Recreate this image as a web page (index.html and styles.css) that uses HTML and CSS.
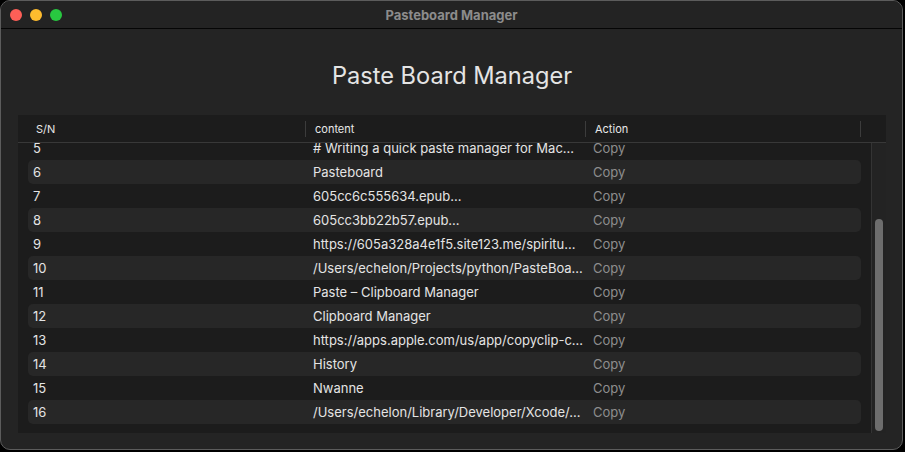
FILE: index.html
```html
<!DOCTYPE html>
<html lang="en">
<head>
    <meta charset="UTF-8">
    <meta name="viewport" content="width=device-width, initial-scale=1.0">
    <title>Pasteboard Manager</title>
    <link rel="stylesheet" href="styles.css">
</head>
<body>
    <div class="window">
        <div class="titlebar">
            <div class="lights">
                <span class="light red"></span>
                <span class="light yellow"></span>
                <span class="light green"></span>
            </div>
            <div class="title">Pasteboard Manager</div>
        </div>
        <div class="main">
            <h1>Paste Board Manager</h1>
            <div class="table">
                <div class="table-head">
                    <div class="th first">S/N</div>
                    <div class="th">content</div>
                    <div class="th">Action</div>
                    <div class="th last"></div>
                </div>
                <div class="table-body">
                    <div class="rows">
                        <div class="row"><span>5</span><span class="content"># Writing a quick paste manager for Mac...</span><span class="copy">Copy</span></div>
                        <div class="row"><span>6</span><span class="content">Pasteboard</span><span class="copy">Copy</span></div>
                        <div class="row"><span>7</span><span class="content">605cc6c555634.epub...</span><span class="copy">Copy</span></div>
                        <div class="row"><span>8</span><span class="content">605cc3bb22b57.epub...</span><span class="copy">Copy</span></div>
                        <div class="row"><span>9</span><span class="content">https://605a328a4e1f5.site123.me/spiritu...</span><span class="copy">Copy</span></div>
                        <div class="row"><span>10</span><span class="content">/Users/echelon/Projects/python/PasteBoa...</span><span class="copy">Copy</span></div>
                        <div class="row"><span>11</span><span class="content">Paste – Clipboard Manager</span><span class="copy">Copy</span></div>
                        <div class="row"><span>12</span><span class="content">Clipboard Manager</span><span class="copy">Copy</span></div>
                        <div class="row"><span>13</span><span class="content">https://apps.apple.com/us/app/copyclip-c...</span><span class="copy">Copy</span></div>
                        <div class="row"><span>14</span><span class="content">History</span><span class="copy">Copy</span></div>
                        <div class="row"><span>15</span><span class="content">Nwanne</span><span class="copy">Copy</span></div>
                        <div class="row"><span>16</span><span class="content">/Users/echelon/Library/Developer/Xcode/...</span><span class="copy">Copy</span></div>
                    </div>
                    <div class="scrollbar"><div class="thumb"></div></div>
                </div>
            </div>
        </div>
    </div>
</body>
</html>
```

FILE: styles.css
```css
* {
    box-sizing: border-box;
}
body {
    margin: 0;
    background: #000;
    font-family: Inter, "Noto Sans", sans-serif;
}
.window {
    width: 903px;
    height: 450px;
    border: 1px solid #5c5c5c;
    border-radius: 10px;
    background: #242424;
    overflow: hidden;
    display: flex;
    flex-direction: column;
}
.titlebar {
    height: 28px;
    flex: none;
    border-bottom: 1px solid #050505;
    display: flex;
    align-items: center;
    position: relative;
    background: #232323;
}
.lights {
    display: flex;
    gap: 8px;
    padding-left: 9px;
}
.light {
    width: 12px;
    height: 12px;
    border-radius: 50%;
}
.red {
    background: #fe5f57;
}
.yellow {
    background: #febc2e;
}
.green {
    background: #28c840;
}
.title {
    position: absolute;
    left: 0;
    right: 0;
    text-align: center;
    color: #8c8c8c;
    font-size: 13px;
    font-weight: 700;
}
.main {
    flex: 1;
    display: flex;
    flex-direction: column;
    padding: 0 16px 0 17px;
}
h1 {
    margin: 32px 0 24px;
    text-align: center;
    font-size: 23.6px;
    line-height: 30px;
    font-weight: 400;
    color: #e4e4e4;
}
.table {
    height: 318px;
    background: #1c1c1c;
    display: flex;
    flex-direction: column;
}
.table-head {
    height: 28px;
    flex: none;
    display: grid;
    grid-template-columns: 287px 280px 275px 1fr;
    align-items: center;
    border-bottom: 1px solid #383838;
    font-size: 11px;
    color: #e8e8e8;
}
.th {
    padding-left: 9px;
    border-left: 1px solid #3c3c3c;
    line-height: 16px;
    height: 16px;
}
.th.first {
    padding-left: 18px;
    border-left: none;
}
.table-body {
    flex: 1;
    display: flex;
    overflow: hidden;
}
.rows {
    flex: 1;
    padding: 0 10px 0 10px;
    margin-top: -7px;
}
.row {
    height: 24px;
    display: grid;
    grid-template-columns: 280px 280px 1fr;
    align-items: center;
    padding-left: 5px;
    border-radius: 5px;
    font-size: 13px;
    color: #e4e4e4;
}
.row:nth-child(even) {
    background: #272727;
}
.row .copy {
    color: #8e8e8e;
}
.scrollbar {
    width: 15px;
    flex: none;
    background: #232323;
    border-left: 1px solid #343434;
    padding: 76px 3px 2px 3px;
}
.thumb {
    height: 100%;
    width: 8px;
    border-radius: 4px;
    background: #6d6d6d;
}
```
